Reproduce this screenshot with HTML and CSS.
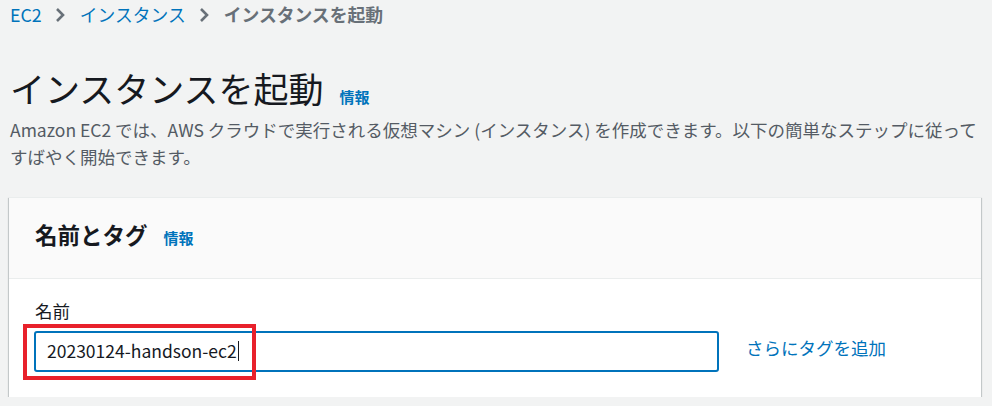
FILE: index.html
```html
<!DOCTYPE html>
<html lang="ja">
<head>
<meta charset="utf-8">
<title>インスタンスを起動</title>
<link rel="stylesheet" href="styles.css">
</head>
<body>
<div class="page">
  <nav class="crumbs">
    <span class="crumb-link">EC2</span>
    <svg class="chev" viewBox="0 0 12 16" width="12" height="16"><path d="M3 2 L9 8 L3 14" fill="none" stroke="#687078" stroke-width="2.6" stroke-linejoin="miter"/></svg>
    <span class="crumb-link">インスタンス</span>
    <svg class="chev" viewBox="0 0 12 16" width="12" height="16"><path d="M3 2 L9 8 L3 14" fill="none" stroke="#687078" stroke-width="2.6" stroke-linejoin="miter"/></svg>
    <span class="crumb-current">インスタンスを起動</span>
  </nav>

  <header class="page-head">
    <h1 class="title">インスタンスを起動<span class="info info-title">情報</span></h1>
    <p class="desc">Amazon EC2 では、AWS クラウドで実行される仮想マシン (インスタンス) を作成できます。以下の簡単なステップに従って<br>すばやく開始できます。</p>
  </header>

  <section class="card">
    <div class="card-head">
      <h2 class="card-title">名前とタグ<span class="info info-card">情報</span></h2>
    </div>
    <div class="card-body">
      <div class="label">名前</div>
      <div class="row">
        <div class="field">
          <div class="input"><span class="value">20230124-handson-ec2</span><span class="caret"></span></div>
          <div class="highlight"></div>
        </div>
        <span class="add-tag">さらにタグを追加</span>
      </div>
    </div>
  </section>
</div>
</body>
</html>
```

FILE: styles.css
```css
* { box-sizing: border-box; }

html, body {
  margin: 0;
  padding: 0;
  background: #f2f3f3;
}

body {
  font-family: "Noto Sans CJK JP", "Noto Sans", sans-serif;
  font-size: 17.5px;
  line-height: 27.5px;
  color: #16191f;
}

.page {
  padding: 1px 11px 0 9px;
}

.crumbs {
  display: flex;
  align-items: center;
  height: 27.5px;
  padding-left: 1px;
  font-size: 17.8px;
}

.crumb-link {
  color: #0073bb;
}

.chev {
  display: block;
  margin: 0 14px 0 12px;
}

.crumb-current {
  color: #687078;
  font-weight: 700;
}

.page-head {
  margin-top: 36px;
}

.title {
  margin: 0;
  font-size: 35px;
  line-height: 45px;
  font-weight: 400;
  color: #16191f;
  padding-left: 1px;
}

.info {
  color: #0073bb;
  font-weight: 700;
  font-size: 15px;
  line-height: 1;
}

.info-title {
  margin-left: 16px;
}

.desc {
  margin: 6px 0 0;
  padding-left: 1px;
  color: #545b64;
  font-size: 17.5px;
  line-height: 27.5px;
  white-space: nowrap;
}

.card {
  margin-top: 26px;
  background: #ffffff;
  border-top: 1px solid #eaeded;
  box-shadow: 0 1px 1px 0 rgba(0, 28, 36, 0.3), 1px 1px 1px 0 rgba(0, 28, 36, 0.15), -1px 1px 1px 0 rgba(0, 28, 36, 0.15);
}

.card-head {
  background: #fafafa;
  border-bottom: 1px solid #eaeded;
  padding: 21px 25px 0 26px;
  height: 81px;
}

.card-title {
  margin: 0;
  font-size: 22.5px;
  line-height: 30px;
  font-weight: 700;
  color: #16191f;
}

.info-card {
  margin-left: 16px;
}

.card-body {
  padding: 18px 25px 25px 25px;
}

.label {
  padding-left: 1px;
  color: #16191f;
  line-height: 27.5px;
}

.row {
  margin-top: 6.5px;
  display: flex;
  align-items: center;
  gap: 27px;
}

.field {
  position: relative;
  width: 685px;
}

.input {
  height: 41px;
  border: 2px solid #0073bb;
  border-radius: 3px;
  background: #ffffff;
  padding: 0 11px;
  display: flex;
  align-items: center;
  color: #16191f;
}

.caret {
  display: inline-block;
  width: 1px;
  height: 20px;
  background: #16191f;
  margin-left: 1px;
}

.highlight {
  position: absolute;
  left: -11px;
  top: -7px;
  width: 233px;
  height: 56px;
  border: 4px solid #e8212b;
  pointer-events: none;
}

.add-tag {
  color: #0073bb;
  margin-top: -6px;
}
```
